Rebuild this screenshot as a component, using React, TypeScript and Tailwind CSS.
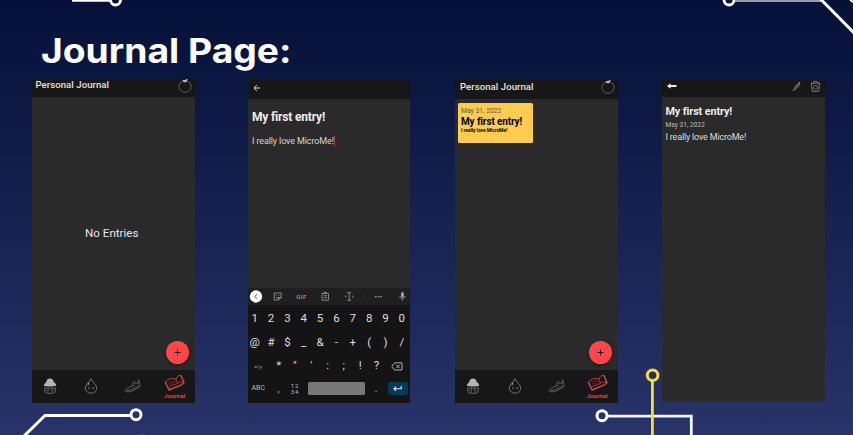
import React from "react";

function BackgroundLines() {
  return (
    <svg className="pointer-events-none absolute inset-0" width="853" height="435" viewBox="0 0 853 435" fill="none" stroke="#fff" strokeWidth="3">
      <path d="M72 0.3H110" />
      <circle cx="115.5" cy="0" r="5" />
      <circle cx="729" cy="0" r="5" />
      <path d="M734 1H821" stroke="#c9ccd8" strokeWidth="1.6" />
      <path d="M820.5 -1L855 34" />
      <path d="M850 0L855 3" strokeWidth="2" />
      <path d="M24 436L45 415.5H131" />
      <circle cx="136" cy="414.7" r="5" />
      <circle cx="602" cy="415.7" r="5" />
      <path d="M607 416.2H691.3V436" stroke="#f4f4fb" strokeWidth="2.8" />
      <path d="M652.4 380V436" stroke="#f7dc3b" strokeWidth="2.8" />
      <circle cx="652.6" cy="375.3" r="5.3" stroke="#f7dc3b" />
      <circle cx="142" cy="438.8" r="5.2" fill="#0756a6" stroke="none" />
    </svg>
  );
}

function Apple({ className = "" }: { className?: string }) {
  return (
    <svg className={className} width="14" height="14" viewBox="0 0 14 14" fill="none">
      <path d="M7 3.2C4.5 1.3 1 3.4 1 7.3C1 10.8 3.5 13.2 7 13.2S13 10.800 13 7.300C13 3.400 9.500 1.300 7 3.200Z" stroke="#666" strokeWidth=".9" />
      <path d="M5.200 1.200L7 2.500L9.200.4" stroke="#eee" strokeWidth="1.300" />
    </svg>
  );
}

function Mushroom() {
  return (
    <svg width="14" height="16" viewBox="0 0 14 16" fill="none">
      <path d="M.8 7.500C.9 6 2.200 5.200 3.100 4.300C3.400 2.100 5 .6 7 .6s3.400 1.500 3.800 3.500c1.200.9 2.400 1.800 2.400 3.400C11 8.900 3 8.900.8 7.500Z" fill="#b4b4b4" />
      <path d="M2.200 9C1.300 11 1.500 14 2.700 14.700C4.500 15.500 9.500 15.500 11.300 14.700C12.500 14 12.700 11 11.800 9" stroke="#777" strokeWidth=".9" />
      <path d="M2.200 10.300H11.800M5.300 9.500V13.500M8.700 9.500V13.500M3 12.800H5M9 12.800H11" stroke="#6c6c6c" strokeWidth=".8" />
    </svg>
  );
}

function Drop() {
  return (
    <svg width="14" height="16" viewBox="0 0 14 16" fill="none">
      <path d="M7 .8C5.500 4 1.300 6.800 1.300 10.200C1.300 13.200 3.800 15.200 7 15.200s5.700-2 5.700-5C12.700 6.800 8.500 4 7 .8Z" stroke="#777" strokeWidth=".9" />
      <path d="M5 9.300V11.200M9.200 9.300V11.200" stroke="#999" strokeWidth=".9" />
      <path d="M3.200 5.900L5.400 4.200L4.400 7.200Z" fill="#bbb" />
    </svg>
  );
}

function Shoe() {
  return (
    <svg width="17" height="14" viewBox="0 0 17 14" fill="none" strokeLinejoin="round">
      <path d="M1 11.500C1.500 9.800 5.500 9.300 8 6.300L10.300 2.300L11.500 5L14.300 4.200L14.500.8L15.700 4.800C16.200 7 15.800 8 14.500 8.700L8.500 12C5.500 13.300 1.300 13.300 1 11.500Z" stroke="#6c6c6c" strokeWidth=".8" />
      <path d="M2 11.600C6 12 12 9 15.500 6.500M7.300 7.300L9.500 8.700M8.600 5.800L11 7.600" stroke="#777" strokeWidth=".7" />
    </svg>
  );
}

function Book() {
  return (
    <svg width="21" height="17" viewBox="0 0 21 17" fill="none" strokeLinejoin="round">
      <path d="M1.300 8L5 16L17.500 10.800L20 8.500L16.800 1.200" stroke="#e0454a" strokeWidth="1.400" />
      <path d="M1.300 8C3 6 5 5 7.500 4.600C9.500 4 10.800 4.600 12 5.400C12.500 3 14.300 1.300 16.800 1.200" stroke="#c43b40" strokeWidth="1" />
      <path d="M4.500 13.500C8 10.500 11.500 11 13.500 9.200C15 8 17.500 7.600 19.300 8M12 5.400L13.500 9.200" stroke="#b9383c" strokeWidth=".9" />
      <path d="M4 8.200C6.500 6.200 9 5.600 11.200 6.200L12.400 9C10 9.600 7.500 10 5.500 11.700Z" fill="#421c1e" />
    </svg>
  );
}

function AppHeader({ height, name }: { height: string; name: string }) {
  return (
    <header className={`flex shrink-0 justify-between bg-[#171717] ${height}`}>
      <h2 className={`text-[9.6px] leading-[12px] font-medium tracking-[0.05px] whitespace-nowrap text-[#e2e2e2] ${name}`}>Personal Journal</h2>
      <Apple className="mr-[3px]" />
    </header>
  );
}

function BottomNav({ height, shift = "" }: { height: string; shift?: string }) {
  return (
    <nav className={`grid shrink-0 grid-cols-4 justify-items-center bg-[#171717] ${height}`}>
      <div className={`mt-[8px] mr-[5px] ${shift}`}><Mushroom /></div>
      <div className={`mt-[8px] mr-[4px] ${shift}`}><Drop /></div>
      <div className={`mt-[9px] mr-[2px] ${shift}`}><Shoe /></div>
      <div className="mt-[4px] flex flex-col items-center">
        <Book />
        <span className="mt-[1px] text-[6px] leading-[8px] font-bold tracking-[0.02em] text-[#e64348]">Journal</span>
      </div>
    </nav>
  );
}

function AddButton() {
  return (
    <button className="mr-[6px] mb-[6px] flex size-[23px] items-center justify-center self-end rounded-full bg-[#ff474b] shadow-[0_1px_3px_#0008]" aria-label="Add">
      <svg width="7" height="7" viewBox="0 0 7 7" stroke="#241010" strokeWidth="1"><path d="M3.500.5V6.500M.5 3.500H6.500" /></svg>
    </button>
  );
}

function KeyRow({ keys }: { keys: string[] }) {
  return (
    <div className="-ml-px grid h-[24px] grid-cols-10 items-center text-center text-[11.500px] text-[#dedede]">
      {keys.map((k) => <span key={k}>{k}</span>)}
    </div>
  );
}

function Keyboard() {
  return (
    <section className="h-[115px] shrink-0 bg-[#141414]">
      <div className="flex h-[17px] items-center bg-[#1f1f1f]">
        <svg width="163" height="17" viewBox="0 0 163 17" fill="none" stroke="#929292" strokeWidth=".9">
          <circle cx="8" cy="8.500" r="6.200" fill="#fff" stroke="none" />
          <path d="M9 6.300L6.900 8.500L9 10.700" stroke="#333" />
          <path d="M26.300 5H33.300V9.500L30.800 12H26.300ZM33.300 9.500H30.800V12M28 7.300H28.900M30.700 7.300H31.600M28 9.200Q29.700 10.800 31 9.200" />
          <text x="48.500" y="10.800" fill="#929292" stroke="none" fontSize="6" fontWeight="700" textLength="10">GIF</text>
          <path d="M74.300 5.500H80.800V12.200H74.300ZM76.300 5.500V4.300H78.800V5.500M76 7.700H79.300M76 9.700H79.300" />
          <path d="M99.500 4.700H103.500M101.500 4.700V12.300M99.500 12.300H103.500" />
          <path d="M98.500 7L96.800 8.500L98.500 10ZM104.500 7L106.200 8.500L104.500 10Z" fill="#777" stroke="none" />
          <path d="M117 5V12" stroke="#292929" />
          <path d="M127.300 8.600H134.500" strokeWidth="1.300" strokeDasharray="1.700 1" />
          <rect x="153.500" y="4.300" width="2.800" height="5.300" rx="1.400" fill="#aaa" stroke="none" />
          <path d="M152.300 8C152.300 11.600 157.500 11.600 157.500 8M154.900 10.800V12.700" />
        </svg>
      </div>
      <div className="h-[2px]" />
      <KeyRow keys={["1", "2", "3", "4", "5", "6", "7", "8", "9", "0"]} />
      <KeyRow keys={["@", "#", "$", "_", "&", "-", "+", "(", ")", "/"]} />
      <div className="-ml-px grid h-[22px] grid-cols-[24px_repeat(7,16.300px)_24px] items-center text-center text-[11.500px] text-[#dedede]">
        <span className="text-[6px] text-[#aaa]">=\&lt;</span>
        {["*", '"', "'", ":", ";", "!", "?"].map((k) => <span key={k}>{k}</span>)}
        <svg className="ml-[6px]" width="12" height="9" viewBox="0 0 12 9" fill="none" stroke="#bbb" strokeWidth=".9">
          <path d="M3.500 .8H11V8H3.500L.8 4.400ZM5.300 2.700L8.700 6.100M8.700 2.700L5.300 6.100" />
        </svg>
      </div>
      <div className="flex h-[23px] items-center text-[#bbb]">
        <span className="ml-[4px] w-[19px] text-[7px]">ABC</span>
        <span className="w-[16px] text-center text-[10px]">,</span>
        <span className="w-[17px] text-center text-[6px] leading-[5.500px] tracking-[1px]">12<br />34</span>
        <span className="ml-[4px] h-[13px] w-[57px] rounded-[1.500px] bg-[#777]" />
        <span className="w-[23px] text-center text-[10px]">.</span>
        <span className="flex h-[13px] w-[20px] items-center justify-center rounded-[3px] bg-[#07395a]">
          <svg width="9" height="7" viewBox="0 0 9 7" fill="none" stroke="#e0edf5" strokeWidth="1.100"><path d="M8.200 1V3.700H1M3 1.600L1 3.700L3 5.800" /></svg>
        </span>
      </div>
    </section>
  );
}

export default function App() {
  return (
    <main className="relative h-[435px] w-[853px] overflow-hidden bg-gradient-to-b from-[#051138] to-[#283369] font-['Roboto','Liberation_Sans',sans-serif]">
      <BackgroundLines />
      <h1 className="relative h-[79px] origin-left scale-x-[1.096] pt-[30px] pl-[37.400px] font-['Inter','Open_Sans',sans-serif] text-[34px] leading-[42px] font-bold whitespace-nowrap text-white">Journal Page:</h1>
      <div className="flex items-start pl-[32px]">
        <article className="flex h-[324px] w-[163px] flex-col bg-[#2a2a2a]">
          <AppHeader height="h-[17.500px]" name="ml-[3.500px]" />
          <div className="flex flex-1 flex-col">
            <p className="mt-[129.500px] pr-[3.500px] text-center text-[11.600px] leading-[14px] text-[#e8e8e8]">No Entries</p>
            <div className="flex-1" />
            <AddButton />
          </div>
          <BottomNav height="h-[33px]" />
        </article>

        <article className="mt-[0.500px] ml-[52.500px] flex h-[323.500px] w-[162.500px] flex-col bg-[#2a2a2a]">
          <header className="h-[19.500px] bg-[#171717] pt-[4px] pl-[5.500px]">
            <svg width="8" height="8" viewBox="0 0 8 8" fill="none" stroke="#ddd" strokeWidth="1"><path d="M7 4H1M3.800 1.200L1 4L3.800 6.800" /></svg>
          </header>
          <div className="flex-1 pt-[11px] pl-[4.500px]">
            <h3 className="text-[12px] leading-[14px] font-bold tracking-[-0.180px] text-[#eee]">My first entry!</h3>
            <p className="mt-[11.500px] flex items-center text-[9px] leading-[11px] tracking-[-0.120px] text-[#d5d5d5]">I really love MicroMe!<span className="h-[10px] w-[1.500px] bg-[#c33]" /></p>
          </div>
          <Keyboard />
        </article>

        <article className="mt-px ml-[44.500px] flex h-[322.500px] w-[163px] flex-col bg-[#2a2a2a]">
          <AppHeader height="h-[19px]" name="ml-[5.500px] mt-[1px]" />
          <div className="flex flex-1 flex-col">
            <section className="mt-[4px] ml-[3.500px] h-[40px] w-[75px] rounded-[1.500px] bg-[#ffcb50] pt-[4px] pl-[3px] text-black">
              <p className="text-[6.800px] leading-[8px] text-[#6b592e]">May 31, 2022</p>
              <h3 className="text-[10px] leading-[13px] font-bold tracking-[-0.130px] whitespace-nowrap">My first entry!</h3>
              <p className="text-[4.800px] leading-[5px] font-bold">I really love MicroMe!</p>
            </section>
            <div className="flex-1" />
            <AddButton />
          </div>
          <BottomNav height="h-[33px]" shift="translate-x-px" />
        </article>

        <article className="ml-[44.500px] h-[322px] w-[163px] bg-[#2a2a2a]">
          <header className="flex h-[18px] bg-[#171717]">
            <svg width="163" height="18" viewBox="0 0 163 18" fill="none">
              <path d="M5 7L8.500 4.300V6H14.500V8H8.500V9.700Z" fill="#eee" />
              <path d="M130.800 12L137.800 3L136.500 7.500L132.500 11" stroke="#999" strokeWidth=".8" />
              <path d="M132 10.500L134.300 6L138 3" stroke="#777" strokeWidth=".8" />
              <path d="M149.300 4.500L150.500 12.300H156.500L157.700 4.500M148.800 4.300H158.200M151 4L151.700 2.500H155.300L156 4" stroke="#888" strokeWidth=".9" />
              <circle cx="153.500" cy="8.300" r="1.900" stroke="#777" strokeWidth=".9" />
            </svg>
          </header>
          <div className="pt-[8px] pl-[3.500px]">
            <h3 className="text-[10.800px] leading-[14px] font-bold tracking-[-0.100px] text-[#eee]">My first entry!</h3>
            <p className="mt-[2px] text-[6.500px] leading-[8px] tracking-[0.060px] text-[#bbb]">May 31, 2022</p>
            <p className="mt-[3px] text-[9px] leading-[11px] tracking-[-0.180px] text-[#ddd]">I really love MicroMe!</p>
          </div>
        </article>
      </div>
    </main>
  );
}
